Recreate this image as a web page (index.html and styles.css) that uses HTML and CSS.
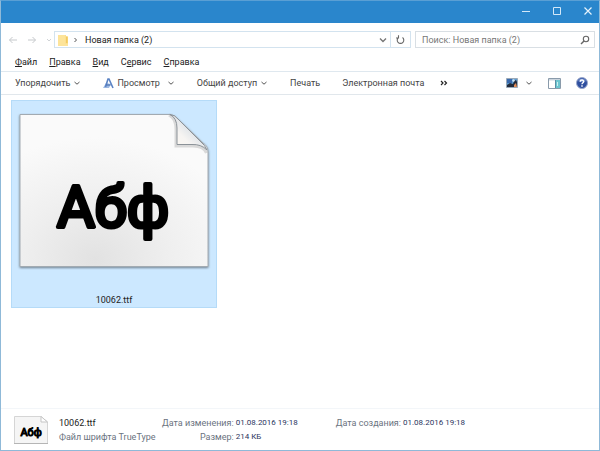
FILE: index.html
```
<!DOCTYPE html>
<html lang="ru">

<head>
  <meta charset="UTF-8">
  <meta name="viewport" content="width=device-width, initial-scale=1.0">
  <title>Новая папка (2)</title>
  <link rel="stylesheet" href="styles.css">
</head>

<body>
  <div class="window">
    <header class="titlebar">
      <button aria-label="Свернуть">
        <svg width="10" height="10" viewBox="0 0 10 10"><path d="M1 5.5h8" stroke="#d3e8f8" fill="none"/></svg>
      </button>
      <button aria-label="Развернуть">
        <svg width="10" height="10" viewBox="0 0 10 10"><path d="M1.5 1.5h7v7h-7z" stroke="#d3e8f8" fill="none"/></svg>
      </button>
      <button aria-label="Закрыть">
        <svg width="10" height="10" viewBox="0 0 10 10"><path d="M1.5 1.5l7 7M8.5 1.5l-7 7" stroke="#e6f3fc" stroke-width="1.2" fill="none"/></svg>
      </button>
    </header>

    <div class="navbar">
      <div class="history">
        <button aria-label="Назад" disabled>
          <svg width="10" height="8" viewBox="0 0 10 8"><path d="M9 4H1.5M4.5 1l-3 3 3 3" stroke="#c6c9cc" fill="none"/></svg>
        </button>
        <button aria-label="Вперед" disabled>
          <svg width="10" height="8" viewBox="0 0 10 8"><path d="M1 4h7.5M5.5 1l3 3-3 3" stroke="#c6c9cc" fill="none"/></svg>
        </button>
        <button aria-label="Журнал" disabled>
          <svg width="6" height="8" viewBox="0 0 6 8"><path d="M1 3l2 2 2-2" stroke="#d0d3d6" fill="none"/></svg>
        </button>
      </div>
      <div class="address">
        <svg width="10" height="12" viewBox="0 0 10 12">
          <path d="M0 1h8v1.5h2V12H0z" fill="#fbdc83"/>
          <path d="M7.5 1v8.5H10V12H0V1z" fill="#fde49a"/>
          <path d="M8 2.5h1.5V9H8z" fill="#f2c962"/>
        </svg>
        <svg class="crumb-arrow" width="5" height="8" viewBox="0 0 5 8"><path d="M1.5 2l2 2-2 2" stroke="#555" fill="none"/></svg>
        <button>Новая папка (2)</button>
        <button class="drop" aria-label="Предыдущие расположения">
          <svg width="8" height="8" viewBox="0 0 8 8"><path d="M1 2.5l3 3 3-3" stroke="#777" stroke-width="1.4" fill="none"/></svg>
        </button>
        <button class="refresh" aria-label="Обновить">
          <svg width="9" height="10" viewBox="0 0 9 10"><path d="M6.5 2.5A3.3 3.3 0 1 1 2.5 2.5M2.5.3v2.7H0" stroke="#666" stroke-width="1.1" fill="none"/></svg>
        </button>
      </div>
      <div class="search">
        <input type="text" placeholder="Поиск: Новая папка (2)" aria-label="Поиск">
        <svg width="10" height="10" viewBox="0 0 10 10"><path d="M1 9l3-3" stroke="#666" stroke-width="1.4"/><circle cx="6" cy="4" r="2.7" stroke="#666" stroke-width="1.1" fill="none"/></svg>
      </div>
    </div>

    <nav class="menubar">
      <button><u>Ф</u>айл</button>
      <button><u>П</u>равка</button>
      <button><u>В</u>ид</button>
      <button>С<u>е</u>рвис</button>
      <button><u>С</u>правка</button>
    </nav>

    <div class="toolbar">
      <button>Упорядочить
        <svg width="8" height="8" viewBox="0 0 8 8"><path d="M1.5 3L4 5.2 6.5 3" stroke="#555" fill="none"/></svg>
      </button>
      <button>
        <svg width="11" height="11" viewBox="0 0 11 11">
          <path d="M0 10l3-5 5 1-2 4z" fill="#9db9e2"/>
          <path d="M2.5 9L5 1h1l4 9" stroke="#5b83c4" stroke-width="1.6" fill="none"/>
          <path d="M3.5 7h4" stroke="#3e66a8"/>
        </svg>
        Просмотр
        <svg class="far" width="8" height="8" viewBox="0 0 8 8"><path d="M1.5 3L4 5.2 6.5 3" stroke="#555" fill="none"/></svg>
      </button>
      <button>Общий доступ
        <svg width="8" height="8" viewBox="0 0 8 8"><path d="M1.5 3L4 5.2 6.5 3" stroke="#555" fill="none"/></svg>
      </button>
      <button>Печать</button>
      <button>Электронная почта</button>
      <button class="more" aria-label="Дополнительно">
        <svg width="8" height="6" viewBox="0 0 8 6"><path d="M1 1l2 2-2 2M4.5 1l2 2-2 2" stroke="#222" stroke-width="1.2" fill="none"/></svg>
      </button>
      <div class="view-tools">
        <button aria-label="Изменить представление">
          <svg width="12" height="10" viewBox="0 0 12 10">
            <path d="M.5.5h11v9H.5z" fill="#5b9bd0" stroke="#9aa9b8"/>
            <path d="M1 1h5v4H1z" fill="#3a69ad"/>
            <path d="M1 9V7l3-2 3 1 1-3 2-1 1 2v5z" fill="#222b3c"/>
            <path d="M8 7l2-2 1 4H8z" fill="#e08a55"/>
            <path d="M6 2l2-1 1 2-2 1z" fill="#cfe2f2"/>
          </svg>
          <svg class="far" width="8" height="8" viewBox="0 0 8 8"><path d="M1.5 3L4 5.2 6.5 3" stroke="#555" fill="none"/></svg>
        </button>
        <button aria-label="Область просмотра">
          <svg width="13" height="11" viewBox="0 0 13 11">
            <path d="M.5.5h12v10H.5z" fill="#fff" stroke="#8a9bab"/>
            <path d="M1 1h11v1.5H1z" fill="#cbd5de"/>
            <path d="M8 2h4v8H8z" fill="#6cc5cf"/>
            <path d="M7.5 2v8" stroke="#5a8ea4"/>
            <path d="M9.5 4v4" stroke="#c9eef0"/>
          </svg>
        </button>
        <button aria-label="Справка">
          <svg width="12" height="12" viewBox="0 0 12 12">
            <circle cx="6" cy="6" r="5.5" fill="#2f4f9f" stroke="#9aa8cc"/>
            <path d="M2 4a4.5 4.5 0 0 1 8 0q-4 2.5-8 0z" fill="#6c88c8"/>
            <path d="M4.2 4.6C4.3 2.4 7.8 2.6 7.7 4.6 7.6 5.7 6 5.8 6 7.2M6 8.2v1.5" stroke="#fff" stroke-width="1.4" fill="none"/>
          </svg>
        </button>
      </div>
    </div>

    <main class="files">
      <figure class="file selected">
        <svg width="194" height="162" viewBox="0 0 194 162">
          <defs>
            <radialGradient id="paper" cx="0.4" cy="0.95" r="0.8">
              <stop offset="0" stop-color="#e2e2e2"/>
              <stop offset="0.5" stop-color="#efefef"/>
              <stop offset="1" stop-color="#fafafa"/>
            </radialGradient>
            <linearGradient id="fold" x1="0" y1="1" x2="0.6" y2="0.4">
              <stop offset="0" stop-color="#fffaf2"/>
              <stop offset="0.6" stop-color="#f6f4f2"/>
              <stop offset="1" stop-color="#dde2e7"/>
            </linearGradient>
            <filter id="shadow" x="-5%" y="-5%" width="110%" height="112%">
              <feDropShadow dx="0" dy="1" stdDeviation="1" flood-color="#4a5560" flood-opacity="0.7"/>
            </filter>
          </defs>
          <path d="M3 4.5H153Q158 5 161 9L186 33Q191 36 191 42V156.5H3z" fill="url(#paper)" stroke="#a2aab1" filter="url(#shadow)"/>
          <path d="M152 5Q159 8 159 19V36H176Q187 36 189.5 43" fill="none" stroke="#9a9a9a" stroke-width="3" opacity="0.35"/>
          <path d="M153 4.5Q160 8 160 18V34.5H175Q184 34 190 40Q188 35 184 32L161 9Q158 5 153 4.5z" fill="url(#fold)" stroke="#8b9298"/>
          <text class="sample" x="96" y="117">Абф</text>
        </svg>
        <figcaption>10062.ttf</figcaption>
      </figure>
    </main>

    <footer class="details">
      <svg width="36" height="30" viewBox="0 0 36 30">
        <path d="M1.5 1.5H28L34.5 7V28.5H1.5z" fill="#f5f5f5" stroke="#d5d5d5"/>
        <path d="M1 28.5H35" stroke="#b5b5b5"/>
        <path d="M28 1.5V7h6.5z" fill="#fff" stroke="#c5c5c5"/>
        <text class="sample small" x="18" y="21">Абф</text>
      </svg>
      <div class="file-info">
        <div class="name">10062.ttf</div>
        <div>Файл шрифта TrueType</div>
      </div>
      <dl>
        <dt>Дата изменения:</dt>
        <dd>01.08.2016 19:18</dd>
        <dt>Размер:</dt>
        <dd>214 КБ</dd>
      </dl>
      <dl>
        <dt>Дата создания:</dt>
        <dd>01.08.2016 19:18</dd>
      </dl>
    </footer>
  </div>
</body>

</html>
```
FILE: styles.css
```
* {
  box-sizing: border-box;
}

body {
  margin: 0;
  font-family: Roboto, 'Open Sans', sans-serif;
  font-size: 9px;
  line-height: 14px;
  color: #222;
}

button {
  display: flex;
  align-items: center;
  padding: 0;
  border: none;
  background: none;
  font: inherit;
  color: inherit;
  white-space: nowrap;
}

svg {
  display: block;
  flex-shrink: 0;
}

.window {
  min-height: 100vh;
  display: flex;
  flex-direction: column;
  background-color: #fff;
  border: 1px solid #8fb9d8;
  border-top-color: #5a9fd4;
}

.titlebar {
  display: flex;
  justify-content: flex-end;
  align-items: center;
  gap: 21px;
  height: 22px;
  padding: 0 6px 2px 0;
  background-color: #2a86cc;
}

.navbar {
  display: flex;
  align-items: center;
  padding: 8px 4px 0 7px;
}

.history {
  display: flex;
  align-items: center;
  gap: 9px;
  width: 46px;
}

.address {
  flex: 1;
  display: flex;
  align-items: center;
  height: 17px;
  padding-left: 3px;
  border: 1px solid #d3e3ef;
}

.crumb-arrow {
  margin: 0 7px 0 5px;
}

.drop {
  margin-left: auto;
  padding-right: 3px;
}

.refresh {
  height: 100%;
  padding: 0 5px;
  border-left: 1px solid #d3e3ef;
}

.search {
  display: flex;
  align-items: center;
  width: 180px;
  height: 17px;
  margin-left: 4px;
  padding: 0 4px 0 6px;
  border: 1px solid #d9dfe4;
}

.search input {
  flex: 1;
  min-width: 0;
  padding: 0;
  border: none;
  outline: none;
  font: inherit;
}

.search input::placeholder {
  color: #777;
}

.menubar {
  display: flex;
  gap: 12px;
  padding: 7px 14px 2px;
  border-bottom: 1px solid #dfe8ef;
}

.toolbar {
  display: flex;
  align-items: center;
  gap: 22px;
  height: 23px;
  padding: 0 11px 0 14px;
  border-bottom: 1px solid #e1e7ec;
  color: #444;
}

.toolbar button {
  gap: 3px;
}

.toolbar .far {
  margin-left: 4px;
}

.toolbar .more {
  margin-left: -6px;
}

.view-tools {
  display: flex;
  align-items: center;
  gap: 15px;
  margin-left: auto;
}

.files {
  flex: 1;
  padding: 5px 10px;
}

.file {
  display: flex;
  flex-direction: column;
  align-items: center;
  width: 206px;
  margin: 0;
  padding: 9px 0 0;
  border: 1px solid #b5dbf8;
  text-align: center;
}

.selected {
  background-color: #cce8ff;
}

.sample {
  font-family: Roboto, sans-serif;
  font-size: 58px;
  text-anchor: middle;
  fill: #000;
  stroke: #000;
  stroke-width: 4px;
  stroke-linejoin: round;
}

.small {
  font-size: 11px;
  stroke-width: 1px;
}

.file figcaption {
  padding: 21px 0 0;
}

.details {
  display: flex;
  align-items: center;
  height: 42px;
  padding: 0 12px;
  border-top: 1px solid #f3f6f9;
  color: #6b7380;
}

.file-info {
  width: 103px;
  margin-left: 10px;
  white-space: nowrap;
}

.name {
  color: #222;
}

.details dl {
  display: grid;
  grid-template-columns: auto auto;
  grid-auto-rows: 14px;
  height: 28px;
  column-gap: 2px;
  margin: 0 38px 0 0;
}

.details dt {
  text-align: right;
}

.details dd {
  margin: 0;
  font-size: 8px;
  color: #2b3560;
}
```
